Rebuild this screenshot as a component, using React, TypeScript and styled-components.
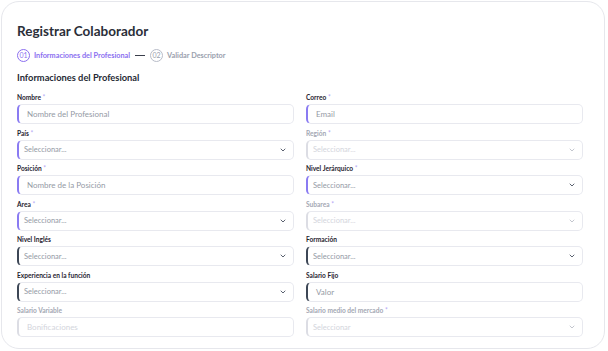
import React from 'react'
import styled, { createGlobalStyle } from 'styled-components'

type Accent = 'required' | 'plain' | 'disabled'

interface FieldDef {
  label: string
  required?: boolean
  placeholder: string
  select?: boolean
  accent: Accent
}

const fields: FieldDef[] = [
  { label: 'Nombre', required: true, placeholder: 'Nombre del Profesional', accent: 'required' },
  { label: 'Correo', required: true, placeholder: 'Email', accent: 'required' },
  { label: 'País', required: true, placeholder: 'Seleccionar...', select: true, accent: 'required' },
  { label: 'Región', required: true, placeholder: 'Seleccionar...', select: true, accent: 'disabled' },
  { label: 'Posición', required: true, placeholder: 'Nombre de la Posición', accent: 'required' },
  { label: 'Nivel Jerárquico', required: true, placeholder: 'Seleccionar...', select: true, accent: 'required' },
  { label: 'Area', required: true, placeholder: 'Seleccionar...', select: true, accent: 'required' },
  { label: 'Subarea', required: true, placeholder: 'Seleccionar...', select: true, accent: 'disabled' },
  { label: 'Nivel Inglés', placeholder: 'Seleccionar...', select: true, accent: 'plain' },
  { label: 'Formación', placeholder: 'Seleccionar...', select: true, accent: 'plain' },
  { label: 'Experiencia en la función', placeholder: 'Seleccionar...', select: true, accent: 'plain' },
  { label: 'Salario Fijo', placeholder: 'Valor', accent: 'plain' },
  { label: 'Salario Variable', placeholder: 'Bonificaciones', accent: 'disabled' },
  { label: 'Salario medio del mercado', required: true, placeholder: 'Seleccionar', select: true, accent: 'disabled' }
]

const accentColor: Record<Accent, string> = {
  required: '#8a7bf2',
  plain: '#3d4756',
  disabled: '#dcdde4'
}

const Chevron = ({ faded }: { faded: boolean }) => (
  <svg width='6' height='4' viewBox='0 0 6 4'>
    <path d='M1 1 L3 3 L5 1' fill='none' stroke={faded ? '#c3c6ce' : '#5b6270'} strokeWidth='1'
      strokeLinecap='round' strokeLinejoin='round' />
  </svg>
)

const App = () => {
  return (
    <>
      <GlobalStyle />
      <Card>
        <Title>Registrar Colaborador</Title>
        <Stepper>
          <Step>
            <StepNumber active>01</StepNumber>
            <StepLabel active>Informaciones del Profesional</StepLabel>
          </Step>
          <StepLine />
          <Step>
            <StepNumber>02</StepNumber>
            <StepLabel>Validar Descriptor</StepLabel>
          </Step>
        </Stepper>
        <SectionTitle>Informaciones del Profesional</SectionTitle>
        <FormGrid>
          {fields.map(f => {
            const disabled = f.accent === 'disabled'
            return (
              <Field key={f.label}>
                <Label disabled={disabled}>
                  {f.label}
                  {f.required && <Star> *</Star>}
                </Label>
                <Control accent={f.accent}>
                  <Placeholder disabled={disabled} select={!!f.select}>{f.placeholder}</Placeholder>
                  {f.select && <Chevron faded={disabled} />}
                </Control>
              </Field>
            )
          })}
        </FormGrid>
      </Card>
    </>
  )
}

const GlobalStyle = createGlobalStyle`
  html, body {
    margin: 0;
    padding: 0;
    background: #ffffff;
    font-family: Lato, "Liberation Sans", sans-serif;
  }
`

const Card = styled.div`
  box-sizing: border-box;
  width: 604px;
  height: 348px;
  margin: 1px 0 0 1px;
  padding: 21px 21px 0 15px;
  border: 1px solid #e6e7ec;
  border-radius: 18px;
  background: #ffffff;
  overflow: hidden;
`

const Title = styled.h1`
  margin: 0;
  font-size: 13.5px;
  line-height: 16px;
  font-weight: 700;
  color: #2a2e38;
`

const Stepper = styled.div`
  display: flex;
  align-items: center;
  gap: 5px;
  margin-top: 9px;
  height: 14px;
`

const Step = styled.div`
  display: flex;
  align-items: center;
  gap: 4px;
`

const StepNumber = styled.span<{ active?: boolean }>`
  box-sizing: border-box;
  width: 13px;
  height: 13px;
  border-radius: 50%;
  border: 1px solid ${p => (p.active ? '#8b6ff0' : '#b8bcc8')};
  color: ${p => (p.active ? '#8b6ff0' : '#9aa0ad')};
  font-size: 7px;
  display: flex;
  align-items: center;
  justify-content: center;
`

const StepLabel = styled.span<{ active?: boolean }>`
  font-size: 7.3px;
  font-weight: 700;
  color: ${p => (p.active ? '#8b6ff0' : '#9aa0ad')};
`

const StepLine = styled.span`
  width: 10px;
  height: 1px;
  background: #3a3f4b;
`

const SectionTitle = styled.h2`
  margin: 9px 0 0;
  font-size: 9.3px;
  line-height: 13px;
  font-weight: 700;
  color: #262a35;
`

const FormGrid = styled.div`
  display: grid;
  grid-template-columns: 277px 277px;
  column-gap: 12px;
  row-gap: 4.5px;
  margin-top: 9px;
`

const Field = styled.div`
  display: flex;
  flex-direction: column;
`

const Label = styled.label<{ disabled: boolean }>`
  font-size: 6.6px;
  line-height: 9px;
  font-weight: 700;
  color: ${p => (p.disabled ? '#a3a7b3' : '#1f2430')};
  margin-bottom: 2px;
`

const Star = styled.span`
  color: #b4a6f5;
  font-weight: 400;
`

const Control = styled.div<{ accent: Accent }>`
  box-sizing: border-box;
  height: 20px;
  display: flex;
  align-items: center;
  justify-content: space-between;
  padding: 0 7px 0 5px;
  border: 1px solid #e8e9ef;
  border-left: 2px solid ${p => accentColor[p.accent]};
  border-radius: 5px;
  background: #ffffff;
`

const Placeholder = styled.span<{ disabled: boolean; select: boolean }>`
  font-size: ${p => (p.select ? 7.5 : 8)}px;
  padding-left: ${p => (p.select ? 0 : 3)}px;
  color: ${p => (p.disabled ? '#d3d5dc' : '#949aa5')};
`

export default App
